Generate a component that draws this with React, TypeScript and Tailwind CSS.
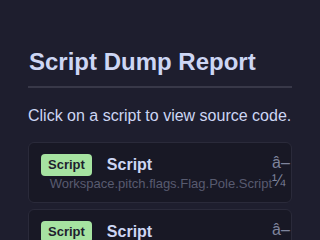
const scripts = [
  { kind: "Script", name: "Script", path: "Workspace.pitch.flags.Flag.Pole.Script" },
  { kind: "Script", name: "Script", path: "Workspace.pitch.flags.Flag.Pole.Script" },
];

function ScriptCard({ kind, name, path }: { kind: string; name: string; path: string }) {
  return (
    <div className="flex items-start rounded-md border border-[#2a2a3a] bg-[#181825] py-[11px] pl-[12px] pr-[1px]">
      <div className="min-w-0 flex-1">
        <div className="flex items-center gap-[15px]">
          <span className="rounded-[4px] bg-[#a6e3a1] px-[7px] py-[4px] text-[13px] font-bold leading-[14px] text-[#1e1e2e]">
            {kind}
          </span>
          <span className="text-[16px] font-bold leading-[20px] text-[#cdd6f4]">{name}</span>
        </div>
        <div className="whitespace-nowrap text-right text-[13px] leading-[15px] text-[#585b70]">{path}</div>
      </div>
      <span className="w-[18px] text-[16px] leading-[18px] text-[#7f849c]">â–¼</span>
    </div>
  );
}

export default function App() {
  return (
    <div className="min-h-screen bg-[#1e1e2e] px-[28px] pt-[46px] font-['Liberation_Sans',Arial,sans-serif]">
      <h1 className="border-b-2 border-[#383848] pb-[8px] pl-[1px] text-[24px] font-bold leading-[32px] text-[#cdd6f4]">
        Script Dump Report
      </h1>
      <p className="mt-[18px] text-[16px] leading-[20px] text-[#cdd6f4]">Click on a script to view source code.</p>
      <div className="mt-[16px] flex flex-col gap-[6px]">
        {scripts.map((s, i) => (
          <ScriptCard key={i} {...s} />
        ))}
      </div>
    </div>
  );
}
